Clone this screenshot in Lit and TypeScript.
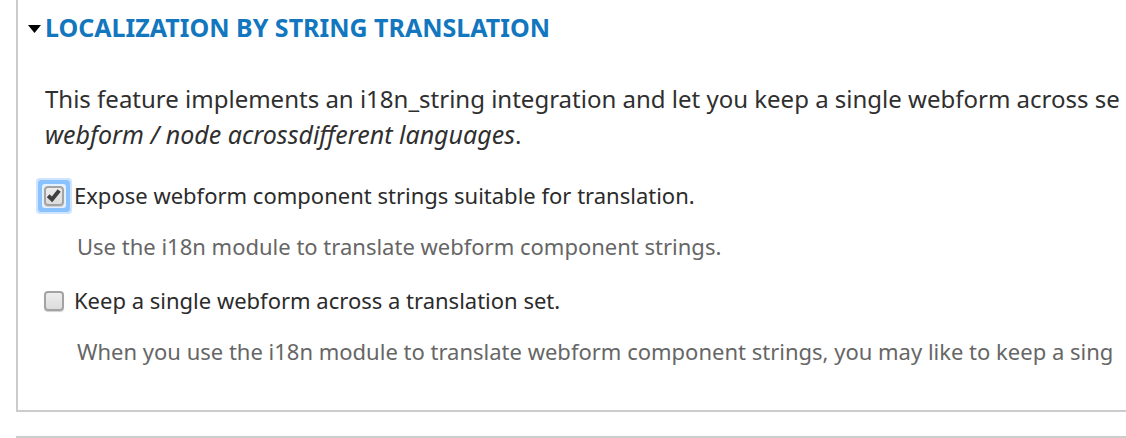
import { LitElement, html, css } from "lit";
import { customElement, property, state } from "lit/decorators.js";

@customElement("option-row")
class OptionRow extends LitElement {
  @property() label = "";
  @property() description = "";
  @property({ type: Boolean }) checked = false;
  @property({ type: Boolean }) highlighted = false;

  static styles = css`
    :host {
      display: block;
    }
    .row {
      display: flex;
      align-items: center;
      gap: 10px;
      height: 32px;
    }
    .box {
      appearance: none;
      box-sizing: border-box;
      width: 20px;
      height: 20px;
      margin: 0;
      border: 2px solid #a3a3a3;
      border-radius: 4px;
      background: linear-gradient(#ededed, #dcdcdc);
      box-shadow: 0 1px 1px #d0d0d0;
      outline: none;
    }
    .control {
      display: grid;
      flex: none;
      border-radius: 1px;
    }
    .control.highlighted {
      box-shadow: 0 0 0 2px #e4f1ff, 0 0 0 6px #8ac1ff, 0 0 0 8px #cfe5ff;
    }
    .control > * {
      grid-area: 1 / 1;
    }
    .tick {
      width: 20px;
      height: 20px;
      pointer-events: none;
    }
    label {
      padding-bottom: 2px;
      color: #2b2b2b;
      white-space: nowrap;
    }
    .description {
      margin: 18px 0 0 33px;
      line-height: 32px;
      color: #666;
      white-space: nowrap;
    }
  `;

  render() {
    return html`
      <div class="row">
        <span class="control ${this.highlighted ? "highlighted" : ""}">
          <input
            id="option"
            type="checkbox"
            class="box"
            aria-describedby="description"
            .checked=${this.checked}
            @change=${(e: Event) => (this.checked = (e.target as HTMLInputElement).checked)}
          />
          ${this.checked
            ? html`<svg class="tick" viewBox="0 0 20 20" aria-hidden="true">
                <path d="M4.2 9.8 8 13.4 15.2 4.4" fill="none" stroke="#404040" stroke-width="4" />
              </svg>`
            : ""}
        </span>
        <label for="option">${this.label}</label>
      </div>
      <p class="description" id="description">${this.description}</p>
    `;
  }
}

@customElement("app-root")
class AppRoot extends LitElement {
  @state() private open = true;

  static styles = css`
    :host {
      display: block;
      overflow: hidden;
      background: #fff;
      font-family: "Noto Sans", "Open Sans", sans-serif;
      font-size: 24px;
      line-height: 36px;
      color: #2f2f2f;
    }
    .panel {
      margin-left: 16px;
      padding: 9px 0 43px 27px;
      border-left: 2px solid #ccc;
      border-bottom: 2px solid #ccc;
    }
    .heading {
      display: flex;
      align-items: center;
      gap: 4px;
      margin: 0 0 0 -17px;
      padding: 0;
      border: 0;
      background: none;
      font: inherit;
      font-size: 25px;
      font-weight: 700;
      text-transform: uppercase;
      color: #1277be;
      white-space: nowrap;
      cursor: pointer;
    }
    .arrow {
      width: 13px;
      height: 8px;
      margin-top: 3px;
      fill: #000;
    }
    .intro {
      margin: 36px 0 27px;
      white-space: nowrap;
    }
    .intro em {
      font-size: 25px;
      line-height: 32px;
    }
    .options {
      display: grid;
      gap: 23px;
      margin-left: -1px;
      font-size: 22px;
    }
    .next {
      margin: 24px 0 0 16px;
      border-top: 2px solid #ccc;
    }
  `;

  render() {
    return html`
      <section class="panel">
        <button class="heading" aria-expanded=${this.open} @click=${() => (this.open = !this.open)}>
          <svg class="arrow" viewBox="0 0 13 8" aria-hidden="true"><path d="M0 0h13L6.5 8z" /></svg>
          <span>Localization by string translation</span>
        </button>
        ${this.open
          ? html`
              <p class="intro">
                This feature implements an i18n_string integration and let you keep a single webform across se<br />
                <em>webform / node acrossdifferent languages</em>.
              </p>
              <div class="options">
                <option-row
                  checked
                  highlighted
                  label="Expose webform component strings suitable for translation."
                  description="Use the i18n module to translate webform component strings."
                ></option-row>
                <option-row
                  label="Keep a single webform across a translation set."
                  description="When you use the i18n module to translate webform component strings, you may like to keep a sing"
                ></option-row>
              </div>
            `
          : ""}
      </section>
      <div class="next"></div>
    `;
  }
}
